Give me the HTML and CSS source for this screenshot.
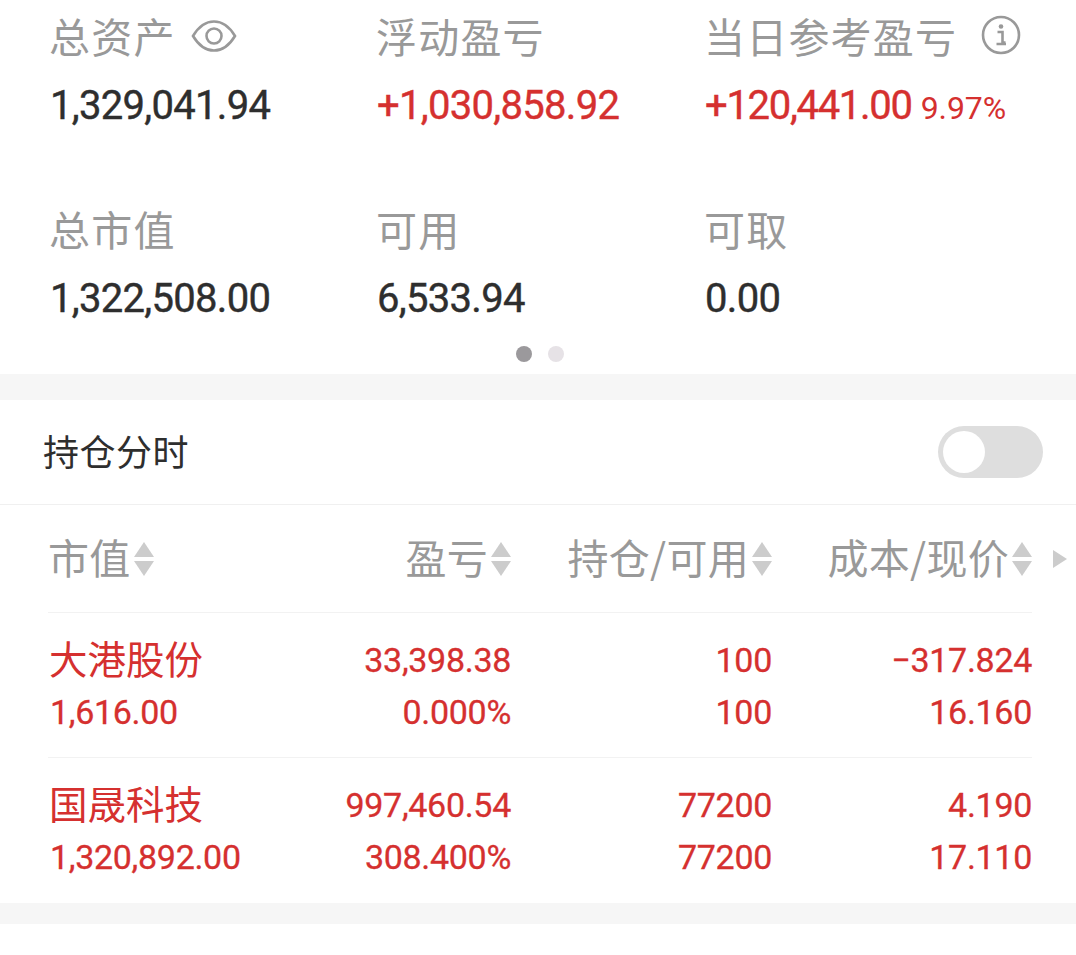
FILE: index.html
```html
<!DOCTYPE html>
<html lang="zh-CN">
<head>
<meta charset="utf-8">
<title>持仓</title>
<link rel="stylesheet" href="styles.css">
</head>
<body>
<section class="summary">
  <div class="stats">
    <div class="stat">
      <div class="label">总资产<svg class="eye" viewBox="0 0 46 34" width="46" height="34"><path d="M2 17C8 7 15 2.500 23 2.500S38 7 44 17C38 27 31 31.500 23 31.500S8 27 2 17Z" fill="none" stroke="#999" stroke-width="2.600"/><circle cx="23" cy="17" r="7.500" fill="none" stroke="#999" stroke-width="2.600"/></svg></div>
      <div class="value dark">1,329,041.94</div>
    </div>
    <div class="stat">
      <div class="label">浮动盈亏</div>
      <div class="value red">+1,030,858.92</div>
    </div>
    <div class="stat">
      <div class="label">当日参考盈亏<svg class="info" viewBox="0 0 40 40" width="40" height="40"><circle cx="20" cy="20" r="18" fill="none" stroke="#999" stroke-width="2.600"/><circle cx="20" cy="11.500" r="2.300" fill="#999"/><path d="M16.500 17H21.500V27.500H24.500M15.500 29H25" fill="none" stroke="#999" stroke-width="2.600"/></svg></div>
      <div class="value red"><span class="tight">+120,441.00</span><span class="pct">9.97%</span></div>
    </div>
    <div class="stat">
      <div class="label">总市值</div>
      <div class="value dark">1,322,508.00</div>
    </div>
    <div class="stat">
      <div class="label">可用</div>
      <div class="value dark">6,533.94</div>
    </div>
    <div class="stat">
      <div class="label">可取</div>
      <div class="value dark">0.00</div>
    </div>
  </div>
  <div class="dots"><span class="dot on"></span><span class="dot"></span></div>
</section>
<div class="band top"></div>
<section class="panel">
  <div class="toggle-row">
    <span class="toggle-label">持仓分时</span>
    <span class="switch"><span class="knob"></span></span>
  </div>
  <div class="table">
    <div class="row head">
      <div class="th left">市值<span class="sort"></span></div>
      <div class="th">盈亏<span class="sort"></span></div>
      <div class="th">持仓/可用<span class="sort"></span></div>
      <div class="th">成本/现价<span class="sort"></span></div>
      <span class="more"></span>
    </div>
    <div class="row item">
      <div class="cell left"><div class="name">大港股份</div><div class="num">1,616.00</div></div>
      <div class="cell"><div class="num">33,398.38</div><div class="num">0.000%</div></div>
      <div class="cell"><div class="num">100</div><div class="num">100</div></div>
      <div class="cell"><div class="num">−317.824</div><div class="num">16.160</div></div>
    </div>
    <div class="row item">
      <div class="cell left"><div class="name">国晟科技</div><div class="num">1,320,892.00</div></div>
      <div class="cell"><div class="num">997,460.54</div><div class="num">308.400%</div></div>
      <div class="cell"><div class="num">77200</div><div class="num">77200</div></div>
      <div class="cell"><div class="num">4.190</div><div class="num">17.110</div></div>
    </div>
  </div>
</section>
<div class="band"></div>
</body>
</html>
```
FILE: styles.css
```css
* { box-sizing: border-box; }
html, body { margin: 0; background: #fff; }
body {
  width: 1076px;
  height: 955px;
  overflow: hidden;
  font-family: Roboto, "Noto Sans CJK SC", sans-serif;
}
.summary { height: 374px; padding-left: 51px; }
.stats {
  display: grid;
  grid-template-columns: 327px 328px 1fr;
  grid-auto-rows: 193px;
}
.stat { padding-top: 12px; }
.label {
  display: flex;
  align-items: center;
  height: 46px;
  margin-left: -2px;
  font-family: "Noto Sans CJK SC", sans-serif;
  font-size: 41px;
  letter-spacing: 1.200px;
  color: #999;
}
.eye { margin-left: 15px; margin-top: 2px; }
.info { margin-left: 24px; }
.value {
  margin-top: 25px;
  margin-left: -1px;
  height: 46px;
  line-height: 46px;
  font-size: 40px;
  letter-spacing: -0.700px;
  -webkit-text-stroke: 0.4px currentColor;
  white-space: nowrap;
}
.dark { color: #2e2e2e; }
.red { color: #d5302f; }
.tight { letter-spacing: -1.300px; }
.pct { margin-left: 9px; font-size: 32px; letter-spacing: -0.100px; -webkit-text-stroke: 0; }
.dots {
  display: flex;
  justify-content: center;
  gap: 16px;
  margin-top: -40px;
  margin-left: -47px;
}
.dot { width: 16px; height: 16px; border-radius: 50%; background: #e6e2e6; }
.dot.on { background: #9b999c; }
.toggle-row {
  display: flex;
  align-items: center;
  justify-content: space-between;
  height: 105px;
  padding: 0 33px 0 43px;
  border-bottom: 1px solid #f0f0f0;
}
.toggle-label {
  padding-bottom: 4px;
  font-family: "Noto Sans CJK SC", sans-serif;
  font-size: 36px;
  letter-spacing: 0.500px;
  color: #2e2e2e;
}
.switch {
  display: flex;
  align-items: center;
  width: 105px;
  height: 52px;
  padding-left: 5px;
  border-radius: 26px;
  background: #dedede;
}
.knob { width: 42px; height: 42px; border-radius: 50%; background: #fff; }
.table { margin: 0 44px 0 48px; }
.row {
  position: relative;
  display: grid;
  grid-template-columns: 1fr 240px 261px 260px;
  border-bottom: 1px solid #f2f2f2;
}
.row:last-child { border-bottom: 0; }
.head { height: 108px; align-items: center; }
.th {
  display: flex;
  align-items: center;
  justify-content: flex-end;
  padding-bottom: 6px;
  font-family: "Noto Sans CJK SC", sans-serif;
  font-size: 41px;
  letter-spacing: 0.300px;
  color: #999;
}
.th.left { justify-content: flex-start; }
.sort {
  position: relative;
  flex: none;
  width: 20px;
  height: 34px;
  margin-top: 6px;
  margin-left: 3px;
}
.sort::before, .sort::after {
  content: "";
  position: absolute;
  left: 0;
  border-left: 10px solid transparent;
  border-right: 10px solid transparent;
}
.sort::before { top: 0; border-bottom: 15px solid #ccc; }
.sort::after { bottom: 0; border-top: 15px solid #ccc; }
.more {
  position: absolute;
  left: 1005px;
  top: 45px;
  border-left: 14px solid #ccc;
  border-top: 9px solid transparent;
  border-bottom: 9px solid transparent;
}
.item { height: 145px; padding-top: 20px; }
.cell {
  display: flex;
  flex-direction: column;
  align-items: flex-end;
  color: #d5302f;
}
.cell.left { align-items: flex-start; padding-left: 2px; }
.name {
  height: 52px;
  line-height: 48px;
  margin-left: -1px;
  font-family: "Noto Sans CJK SC", sans-serif;
  font-size: 38.500px;
}
.num {
  height: 52px;
  line-height: 54px;
  font-size: 34px;
  letter-spacing: -0.300px;
  -webkit-text-stroke: 0.3px currentColor;
  white-space: nowrap;
}
.band { height: 21px; background: #f6f6f6; }
.band.top { height: 26px; }
```
